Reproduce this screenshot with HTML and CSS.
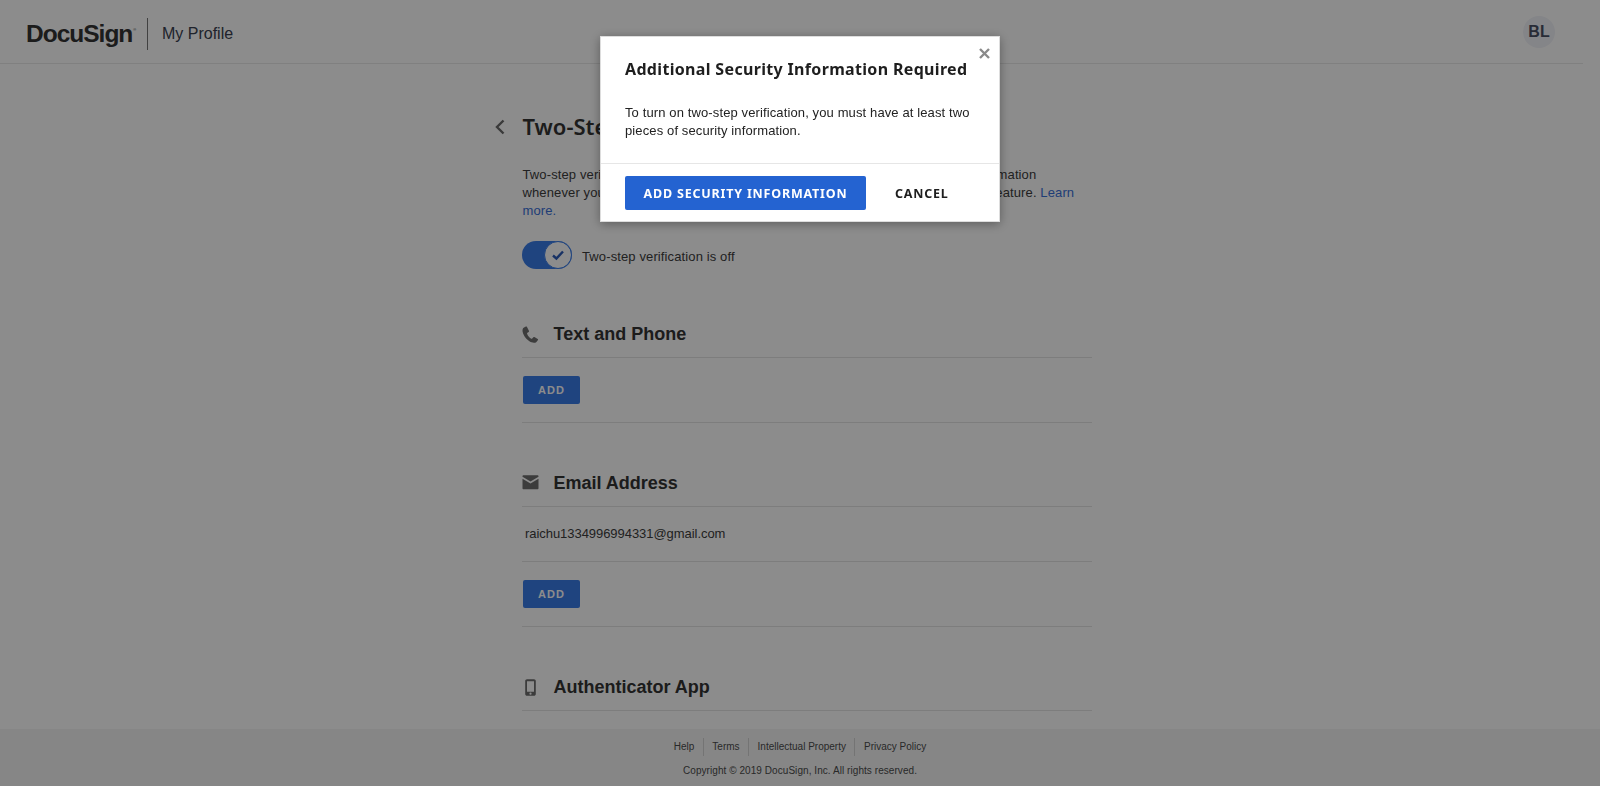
FILE: index.html
```html
<!DOCTYPE html>
<html lang="en">
<head>
<meta charset="utf-8">
<title>My Profile</title>
<link rel="stylesheet" href="styles.css">
</head>
<body>
<header class="topbar">
  <span class="logo">DocuSign<sup class="logo-mark">®</sup></span>
  <span class="app-name">My Profile</span>
  <span class="avatar">BL</span>
</header>
<main class="scroller">
  <div class="column">
    <div class="title-row">
      <svg class="back" width="10" height="16" viewBox="0 0 10 16"><path d="M8.500 1.500 2 8l6.500 6.500" fill="none" stroke="#6b6b6b" stroke-width="2.400"/></svg>
      <h1 class="page-title">Two-Step Verification</h1>
    </div>
    <p class="intro">Two-step verification gives a layer of security by asking for an extra piece of information whenever you sign in from a new browser. You can turn it on or off by using this feature. <a class="link" href="#">Learn more.</a></p>
    <div class="toggle-row">
      <span class="toggle"><span class="knob"><svg width="14" height="12" viewBox="0 0 14 12"><path d="M2 6.500 5.400 9.500 12 2.500" fill="none" stroke="#2d5cb8" stroke-width="2.400"/></svg></span></span>
      <span class="toggle-label">Two-step verification is off</span>
    </div>
    <section class="group">
      <h2 class="group-head">
        <svg class="group-icon" width="17" height="17" viewBox="0 0 17 17"><path d="M3.900.5 1.200 2C.4 3 .2 5 1.100 7.500c1.300 3.600 4.700 7.400 8.400 8.800 2 .7 3.700.5 4.700-.1l1.800-2.300c.2-.4.100-.8-.3-1l-3.300-1.800c-.4-.2-.8-.1-1 .2l-1.200 1.300c-.3.300-.6.300-1 .1-1.900-1-3.500-3.100-4.100-5-.1-.4 0-.7.300-.9l1.300-.9c.3-.2.400-.600.300-1L5 .9C4.800.4 4.300.3 3.900.5Z" fill="#6e6e6e"/></svg>
        Text and Phone
      </h2>
      <div class="group-row"><button class="add-btn">ADD</button></div>
    </section>
    <section class="group group-next">
      <h2 class="group-head">
        <svg class="group-icon" width="17" height="15" viewBox="0 0 17 15"><path d="M.5 1.200C.5.700 1 .3 1.500.3h14c.5 0 1 .4 1 .9v.5L8.500 6.500.5 1.700ZM.5 3.800l8 4.800 8-4.800v9.400c0 .6-.5 1-1 1h-14c-.5 0-1-.4-1-1Z" fill="#6e6e6e"/></svg>
        Email Address
      </h2>
      <div class="email-row">raichu1334996994331@gmail.com</div>
      <div class="group-row"><button class="add-btn">ADD</button></div>
    </section>
    <section class="group group-last">
      <h2 class="group-head">
        <svg class="group-icon phone" width="11" height="17" viewBox="0 0 11 17"><path fill-rule="evenodd" d="M2 .2h7c1 0 1.800.8 1.800 1.800v13c0 1-.8 1.800-1.800 1.800H2c-1 0-1.800-.8-1.800-1.800V2C.2 1 1 .2 2 .2ZM2 2.200v10.600h7V2.200ZM5.500 13.600a1.100 1.100 0 1 0 0 2.200 1.100 1.100 0 0 0 0-2.200Z" fill="#6e6e6e"/></svg>
        Authenticator App
      </h2>
    </section>
  </div>
</main>
<footer class="footer">
  <nav class="footer-links">
    <a class="footer-link" href="#">Help</a>
    <a class="footer-link" href="#">Terms</a>
    <a class="footer-link" href="#">Intellectual Property</a>
    <a class="footer-link" href="#">Privacy Policy</a>
  </nav>
  <p class="copyright">Copyright © 2019 DocuSign, Inc. All rights reserved.</p>
</footer>
<div class="overlay">
  <div class="modal" role="dialog">
    <svg class="close" width="11" height="11" viewBox="0 0 11 11"><path d="M1 1l9 9M10 1l-9 9" stroke="#8a8a8a" stroke-width="2.400" fill="none"/></svg>
    <h3 class="modal-title">Additional Security Information Required</h3>
    <p class="modal-body">To turn on two-step verification, you must have at least two pieces of security information.</p>
    <div class="modal-actions">
      <button class="btn-primary">ADD SECURITY INFORMATION</button>
      <button class="btn-cancel">CANCEL</button>
    </div>
  </div>
</div>
</body>
</html>
```
FILE: styles.css
```css
* { box-sizing: border-box; }
html, body { height: 100%; }
body {
  margin: 0;
  height: 100vh;
  overflow: hidden;
  display: flex;
  flex-direction: column;
  background: #fff;
  color: #3c3c3c;
  font-family: "Liberation Sans", Arial, sans-serif;
}
.topbar {
  flex: none;
  height: 64px;
  margin-right: 17px;
  padding: 0 28px 0 26px;
  display: flex;
  align-items: center;
  border-bottom: 1px solid #e9e9e9;
}
.logo {
  width: 121px;
  height: 32px;
  margin-top: 4px;
  display: flex;
  align-items: center;
  font-size: 24.500px;
  font-weight: 700;
  letter-spacing: -1px;
  color: #333;
}
.logo-mark { font-size: 4px; font-weight: 400; margin: -8px 0 0 1px; letter-spacing: 0; }
.app-name {
  height: 32px;
  margin-top: 4px;
  line-height: 32px;
  padding-left: 14px;
  border-left: 1px solid #777;
  font-size: 16px;
  color: #3a4150;
}
.avatar {
  margin-left: auto;
  width: 32px;
  height: 32px;
  border-radius: 50%;
  display: flex;
  align-items: center;
  justify-content: center;
  background: #f1f2f8;
  color: #4a5064;
  font-size: 16px;
  font-weight: 700;
}
.scroller {
  flex: 1;
  min-height: 0;
  overflow: hidden;
  padding-right: 17px;
}
.column {
  width: 600px;
  margin: 0 auto;
  padding: 46px 0 0 30.500px;
}
.title-row { position: relative; display: flex; align-items: center; height: 32px; }
.back { position: absolute; left: -27px; top: 9px; }
.page-title {
  margin: 0 0 0 .5px;
  font-family: "Noto Sans", sans-serif;
  font-size: 22px;
  font-weight: 600;
  color: #333;
}
.intro {
  margin: 24px 0 0 .5px;
  width: 555px;
  font-size: 13px;
  line-height: 18px;
  letter-spacing: .12px;
  color: #3c3c3c;
}
.link { color: #3a70d8; text-decoration: none; }
.toggle-row { display: flex; align-items: center; gap: 10px; margin-top: 21px; }
.toggle {
  width: 50px;
  height: 28px;
  border-radius: 14px;
  background: #3a7ce8;
  display: flex;
  justify-content: flex-end;
}
.knob {
  width: 28px;
  height: 28px;
  border-radius: 50%;
  border: 1px solid #3a7ce8;
  background: #fff;
  display: flex;
  align-items: center;
  justify-content: center;
}
.toggle-label { padding-top: 2px; font-size: 13px; letter-spacing: .12px; color: #3c3c3c; }
.group { margin-top: 50px; }
.group-next { margin-top: 45px; }
.group-last { margin-top: 45px; }
.group-head {
  position: relative;
  margin: 0;
  height: 39px;
  padding: 0 0 8px 31.500px;
  display: flex;
  align-items: center;
  border-bottom: 1px solid #e4e4e4;
  font-size: 18px;
  font-weight: 700;
  color: #333;
}
.group-icon { position: absolute; left: 0; top: 7px; }
.group-icon.phone { left: 3px; }
.group-row { padding: 18px 0; border-bottom: 1px solid #e4e4e4; }
.email-row {
  height: 55px;
  padding: 19px 0 0 3px;
  border-bottom: 1px solid #e4e4e4;
  font-size: 13px;
  letter-spacing: -.05px;
  color: #3c3c3c;
}
.add-btn {
  display: block;
  width: 57px;
  height: 28px;
  margin-left: 1px;
  padding: 0;
  border: 0;
  border-radius: 2px;
  background: #3a7ce8;
  color: #fff;
  font-family: "Liberation Sans", sans-serif;
  font-size: 11px;
  font-weight: 700;
  letter-spacing: 1px;
}
.footer {
  flex: none;
  height: 57px;
  padding-top: 9px;
  background: #f4f4f4;
  text-align: center;
}
.footer-links { display: flex; justify-content: center; }
.footer-link {
  height: 18px;
  line-height: 18px;
  padding: 0 8.500px;
  border-left: 1px solid #d4d4d4;
  font-size: 10px;
  color: #4c4c4c;
  text-decoration: none;
}
.footer-link:first-child { border-left: 0; }
.copyright { margin: 8px 0 0; font-size: 10px; line-height: 14px; letter-spacing: .06px; color: #4c4c4c; }
.overlay {
  position: fixed;
  inset: 0;
  background: rgba(0, 0, 0, .45);
}
.modal {
  position: absolute;
  left: 600px;
  top: 36px;
  width: 400px;
  height: 186px;
  padding: 21px 0 0;
  background: #fff;
  border: 1px solid #ddd;
  box-shadow: 0 2px 10px rgba(0, 0, 0, .35);
}
.close { position: absolute; right: 9px; top: 11px; }
.modal-title {
  margin: 0 24px;
  font-family: "Noto Sans", sans-serif;
  font-size: 16px;
  line-height: 22px;
  font-weight: 700;
  letter-spacing: .33px;
  color: #1e1e1e;
}
.modal-body {
  margin: 24px 24px 0;
  font-size: 13px;
  line-height: 18px;
  letter-spacing: .12px;
  color: #222;
}
.modal-actions {
  margin-top: 23px;
  padding: 12px 24px;
  display: flex;
  align-items: center;
  border-top: 1px solid #e6e6e6;
}
.btn-primary {
  width: 241px;
  height: 34px;
  padding: 0;
  border: 0;
  border-radius: 2px;
  background: #2463d1;
  color: #fff;
  font-family: "Noto Sans", sans-serif;
  font-size: 12.500px;
  font-weight: 700;
  letter-spacing: .8px;
}
.btn-cancel {
  margin-left: 29px;
  padding: 0;
  border: 0;
  background: none;
  color: #1e1e1e;
  font-family: "Noto Sans", sans-serif;
  font-size: 12.500px;
  font-weight: 700;
  letter-spacing: .8px;
}
```
